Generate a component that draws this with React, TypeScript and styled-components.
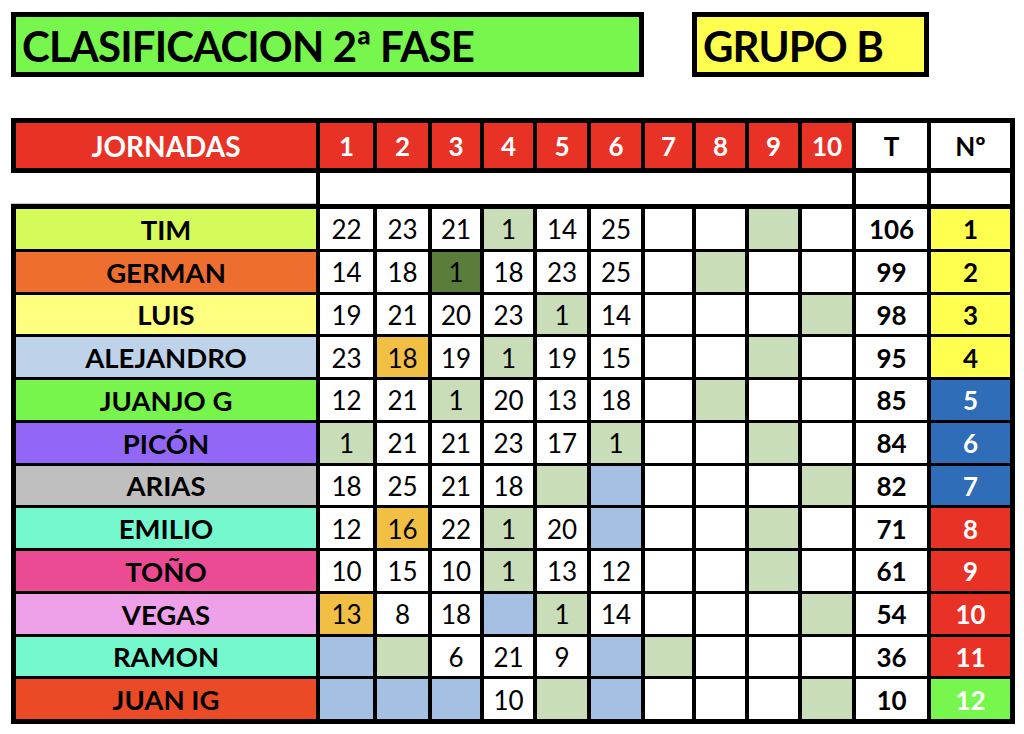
import React from 'react';
import styled, { createGlobalStyle } from 'styled-components';

const GlobalStyle = createGlobalStyle`
  html, body {
    margin: 0;
    padding: 0;
    background: #ffffff;
  }
  body {
    font-family: Lato, "Open Sans", sans-serif;
    color: #000;
  }
`;

// column widths of the sheet (name, 10 jornadas, total, position)
const COLS = '300px 53px 51px 48px 49px 50px 50px 47px 49px 49px 50px 71px 79px';

const C = {
  lightGreen: '#c9ddb8',
  darkGreen: '#5a7d3c',
  orange: '#f2bf45',
  lightBlue: '#a4c1e4',
  red: '#e83226',
  yellow: '#ffff50',
  blue: '#2f6db8',
  green: '#77f74d',
};

type Mark = 'lg' | 'dg' | 'or' | 'lb' | '';

interface Score {
  v: string;
  m: Mark;
}

interface Player {
  name: string;
  color: string;
  scores: Score[];
  total: number;
  pos: number;
}

const markBg: Record<Mark, string> = {
  lg: C.lightGreen,
  dg: C.darkGreen,
  or: C.orange,
  lb: C.lightBlue,
  '': '#ffffff',
};

// "22" plain, "1g" light green, "1d" dark green, "18o" orange, "b" blue empty, "g" green empty
const parse = (row: string): Score[] =>
  row.split(',').map((s) => {
    const v = s.replace(/[a-z]/g, '');
    const t = s.replace(/[0-9]/g, '');
    const m: Mark = t === 'g' ? 'lg' : t === 'd' ? 'dg' : t === 'o' ? 'or' : t === 'b' ? 'lb' : '';
    return { v, m };
  });

const players: Player[] = [
  { name: 'TIM', color: '#d4fb5a', scores: parse('22,23,21,1g,14,25,,,g,'), total: 106, pos: 1 },
  { name: 'GERMAN', color: '#ed6e2f', scores: parse('14,18,1d,18,23,25,,g,,'), total: 99, pos: 2 },
  { name: 'LUIS', color: '#ffff7f', scores: parse('19,21,20,23,1g,14,,,,g'), total: 98, pos: 3 },
  { name: 'ALEJANDRO', color: '#bed3ea', scores: parse('23,18o,19,1g,19,15,,,g,'), total: 95, pos: 4 },
  { name: 'JUANJO G', color: '#77f54d', scores: parse('12,21,1g,20,13,18,,g,,'), total: 85, pos: 5 },
  { name: 'PICÓN', color: '#9267f5', scores: parse('1g,21,21,23,17,1g,,,g,'), total: 84, pos: 6 },
  { name: 'ARIAS', color: '#bfbfbf', scores: parse('18,25,21,18,g,b,,,,g'), total: 82, pos: 7 },
  { name: 'EMILIO', color: '#76f8cf', scores: parse('12,16o,22,1g,20,b,,,g,'), total: 71, pos: 8 },
  { name: 'TOÑO', color: '#ea4b93', scores: parse('10,15,10,1g,13,12,,,g,'), total: 61, pos: 9 },
  { name: 'VEGAS', color: '#eea1e9', scores: parse('13o,8,18,b,1g,14,,,,g'), total: 54, pos: 10 },
  { name: 'RAMON', color: '#76f8cf', scores: parse('b,g,6,21,9,b,g,,,'), total: 36, pos: 11 },
  { name: 'JUAN IG', color: '#ea4a26', scores: parse('b,b,b,10,g,b,,,,g'), total: 10, pos: 12 },
];

const rankColors = (pos: number): { bg: string; fg: string } => {
  if (pos <= 4) return { bg: C.yellow, fg: '#000' };
  if (pos <= 7) return { bg: C.blue, fg: '#fff' };
  if (pos <= 11) return { bg: C.red, fg: '#fff' };
  return { bg: C.green, fg: '#fff' };
};

const Page = styled.div`
  width: 1024px;
  height: 734px;
  box-sizing: border-box;
  padding: 12px 0 0 11px;
  overflow: hidden;
`;

const TitleRow = styled.div`
  display: flex;
  gap: 48px;
  height: 65px;
`;

const TitleBox = styled.div<{ $bg: string; $w: number }>`
  box-sizing: border-box;
  width: ${(p) => p.$w}px;
  height: 65px;
  border: 5px solid #000;
  background: ${(p) => p.$bg};
  display: flex;
  align-items: center;
  padding: 2px 0 0 6px;
  font-size: 42px;
  font-weight: 700;
  letter-spacing: -0.9px;
  white-space: nowrap;
`;

const Sheet = styled.div`
  margin-top: 41px;
  width: 1004px;
  display: flex;
  flex-direction: column;
`;

const HeaderBand = styled.div`
  display: grid;
  grid-template-columns: ${COLS};
  column-gap: 4px;
  padding: 5px;
  background: #000;
  height: 55px;
  box-sizing: border-box;
`;

const HeadCell = styled.div<{ $red?: boolean; $wide?: boolean }>`
  background: ${(p) => (p.$red ? C.red : '#fff')};
  color: ${(p) => (p.$red ? '#fff' : '#000')};
  display: flex;
  align-items: center;
  justify-content: center;
  font-size: ${(p) => (p.$wide ? 28 : 26)}px;
  font-weight: 700;
  padding-top: 1px;
`;

const BlankBand = styled.div`
  display: grid;
  grid-template-columns: 305px 532px 71px 79px;
  column-gap: 4px;
  padding-right: 5px;
  background: #000;
  height: 31px;
`;

const BlankCell = styled.div<{ $grid?: boolean }>`
  background: #fff;
  box-sizing: border-box;
  border-bottom: ${(p) => (p.$grid ? '1px solid #c8c8c8' : 'none')};
`;

const DataBand = styled.div`
  display: grid;
  grid-template-columns: ${COLS};
  grid-auto-rows: 39.75px;
  column-gap: 4px;
  row-gap: 3px;
  padding: 5px;
  background: #000;
`;

const Cell = styled.div<{ $bg: string; $fg?: string; $bold?: boolean; $size?: number }>`
  background: ${(p) => p.$bg};
  color: ${(p) => p.$fg ?? '#000'};
  font-weight: ${(p) => (p.$bold ? 700 : 400)};
  font-size: ${(p) => p.$size ?? 26}px;
  display: flex;
  align-items: center;
  justify-content: center;
  padding-top: 1px;
  white-space: nowrap;
`;

export default function App() {
  return (
    <Page>
      <GlobalStyle />
      <TitleRow>
        <TitleBox $bg={C.green} $w={633}>CLASIFICACION 2ª FASE</TitleBox>
        <TitleBox $bg={C.yellow} $w={237}>GRUPO B</TitleBox>
      </TitleRow>
      <Sheet>
        <HeaderBand>
          <HeadCell $red $wide>JORNADAS</HeadCell>
          {Array.from({ length: 10 }, (_, i) => (
            <HeadCell $red key={i}>
              {i + 1}
            </HeadCell>
          ))}
          <HeadCell>T</HeadCell>
          <HeadCell>Nº</HeadCell>
        </HeaderBand>
        <BlankBand>
          <BlankCell $grid />
          <BlankCell />
          <BlankCell />
          <BlankCell />
        </BlankBand>
        <DataBand>
          {players.map((p) => {
            const rank = rankColors(p.pos);
            return (
              <React.Fragment key={p.name}>
                <Cell $bg={p.color} $bold $size={27.5}>
                  {p.name}
                </Cell>
                {p.scores.map((s, i) => (
                  <Cell key={i} $bg={markBg[s.m]}>
                    {s.v}
                  </Cell>
                ))}
                <Cell $bg="#fff" $bold>
                  {p.total}
                </Cell>
                <Cell $bg={rank.bg} $fg={rank.fg} $bold>
                  {p.pos}
                </Cell>
              </React.Fragment>
            );
          })}
        </DataBand>
      </Sheet>
    </Page>
  );
}
